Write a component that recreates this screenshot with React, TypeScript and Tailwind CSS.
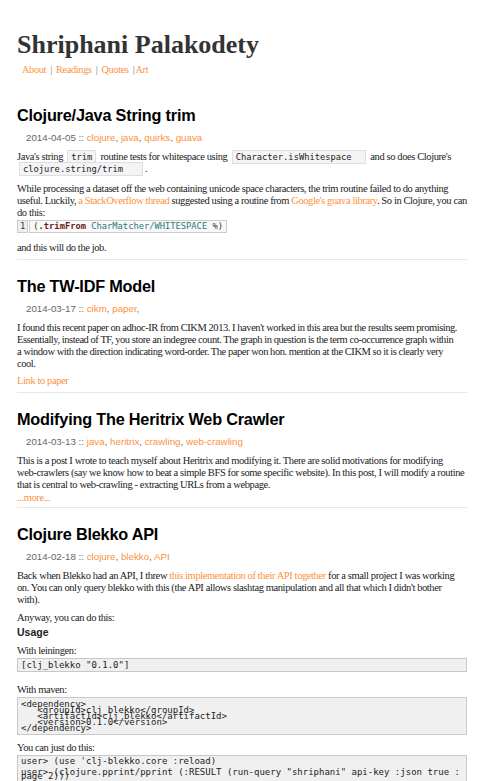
const serif = "font-['Liberation_Serif',serif]";
const sans = "font-['Liberation_Sans',Arial,sans-serif]";
const mono = "font-['DejaVu_Sans_Mono',monospace]";

function Meta({ date, tags }: { date: string; tags: string[] }) {
  return (
    <div className={`${sans} text-[9.75px] leading-[12px] tracking-normal text-[#666] pl-[9px] mt-[6px]`}>
      {date} ::{' '}
      {tags.map((t, i) => (
        <span key={i}>
          <a className="text-[#fb923c]">{t}</a>
          {i < tags.length - 1 ? ', ' : ''}
        </span>
      ))}
    </div>
  );
}

function Code({ children }: { children: React.ReactNode }) {
  return (
    <code
      className={`${mono} text-[8.75px] tracking-normal bg-[#f4f4f6] border border-[#dedede] px-[3px] py-[1px] mx-[2px] whitespace-pre`}>
      {children}
    </code>
  );
}

function Heading({ children }: { children: React.ReactNode }) {
  return <h2 className={`${sans} text-[16.25px] font-bold text-black leading-[22px] tracking-[-0.2px]`}>{children}</h2>;
}

export default function App() {
  return (
    <div
      className={`${serif} bg-white text-[#222] text-[10.5px] leading-[12px] tracking-[-0.4px] pl-[17px] pr-[14px] pt-[30px] w-[481px] h-[781px] overflow-hidden`}>
      <h1 className="text-[26px] font-bold text-[#333] leading-[30px] tracking-normal">Shriphani Palakodety</h1>
      <nav className="text-[10.25px] tracking-[-0.3px] text-[#fb923c] pl-[5px] mt-[4px] flex">
        <span>About</span>
        <span className="text-[#6c7a99] px-[4px]">|</span>
        <span>Readings</span>
        <span className="text-[#6c7a99] px-[4px]">|</span>
        <span>Quotes</span>
        <span className="text-[#6c7a99] pl-[4px] pr-[1px]">|</span>
        <span>Art</span>
      </nav>

      <article className="mt-[28px] border-b border-[#e8e8e8] pb-[5px]">
        <Heading>Clojure/Java String trim</Heading>
        <Meta date="2014-04-05" tags={['clojure', 'java', 'quirks', 'guava']} />
        <p className="mt-[7px]">
          Java's string <Code>trim</Code> routine tests for whitespace using <Code>Character.isWhitespace  </Code> and
          so does Clojure's
          <br />
          <Code>clojure.string/trim   </Code>.
        </p>
        <p className="mt-[8px]">
          While processing a dataset off the web containing unicode space characters, the trim routine failed to do
          anything
          <br />
          useful. Luckily, <a className="text-[#fb923c]">a StackOverflow thread</a> suggested using a routine from{' '}
          <a className="text-[#fb923c]">Google's guava library</a>. So in Clojure, you can
          <br />
          do this:
        </p>
        <div className={`${mono} text-[8.75px] leading-[11px] tracking-normal flex mt-[1px] whitespace-nowrap`}>
          <span className="bg-[#eee] border border-[#ccc] px-[2px] text-[#333]">1</span>
          <span className="border border-[#ccc] bg-[#f8f8f8] px-[3px] ml-[1px] text-[#333]">
            (<span className="text-[#6b1d1d] font-bold">.trimFrom</span>{' '}
            <span className="text-[#2a7a7a]">CharMatcher/WHITESPACE</span> %)
          </span>
        </div>
        <p className="mt-[9px]">and this will do the job.</p>
      </article>

      <article className="mt-[15px] border-b border-[#e8e8e8] pb-[5px]">
        <Heading>The TW-IDF Model</Heading>
        <Meta date="2014-03-17" tags={['cikm', 'paper', '']} />
        <p className="mt-[7px] tracking-[-0.45px]">
          I found this recent paper on adhoc-IR from CIKM 2013. I haven't worked in this area but the results seem
          promising.
          <br />
          Essentially, instead of TF, you store an indegree count. The graph in question is the term co-occurrence graph
          within
          <br />a window with the direction indicating word-order. The paper won hon. mention at the CIKM so it is
          clearly very
          <br />
          cool.
        </p>
        <p className="mt-[5px] text-[#fb923c]">Link to paper</p>
      </article>

      <article className="mt-[15px] border-b border-[#e8e8e8] pb-[3px]">
        <Heading>Modifying The Heritrix Web Crawler</Heading>
        <Meta date="2014-03-13" tags={['java', 'heritrix', 'crawling', 'web-crawling']} />
        <p className="mt-[7px]">
          This is a post I wrote to teach myself about Heritrix and modifying it. There are solid motivations for
          modifying
          <br />
          web-crawlers (say we know how to beat a simple BFS for some specific website). In this post, I will modify a
          routine
          <br />
          that is central to web-crawling - extracting URLs from a webpage.
        </p>
        <p className="mt-[1px] text-[#fb923c]">...more...</p>
      </article>

      <article className="mt-[15px]">
        <Heading>Clojure Blekko API</Heading>
        <Meta date="2014-02-18" tags={['clojure', 'blekko', 'API']} />
        <p className="mt-[7px]">
          Back when Blekko had an API, I threw <a className="text-[#fb923c]">this implementation of their API together</a>{' '}
          for a small project I was working
          <br />
          on. You can only query blekko with this (the API allows slashtag manipulation and all that which I didn't
          bother
          <br />
          with).
        </p>
        <p className="mt-[6px]">Anyway, you can do this:</p>
        <h3 className={`${sans} text-[10.5px] font-bold leading-[14px] tracking-normal mt-[1px]`}>Usage</h3>
        <p className="mt-[6px]">With leiningen:</p>
        <pre
          className={`${mono} text-[9px] leading-[12px] tracking-normal bg-[#f0f0f0] border border-[#c8c8c8] px-[3px] mt-[1px] text-[#222]`}>
          [clj_blekko "0.1.0"]
        </pre>
        <p className="mt-[12px]">With maven:</p>
        <pre
          className={`${mono} text-[9px] leading-[6px] tracking-normal bg-[#f0f0f0] border border-[#c8c8c8] px-[3px] pt-[3px] pb-[3px] mt-[1px] text-[#222]`}>
          {'<dependency>\n   <groupId>clj_blekko</groupId>\n   <artifactId>clj_blekko</artifactId>\n   <version>0.1.0</version>\n</dependency>'}
        </pre>
        <p className="mt-[7px]">You can just do this:</p>
        <pre
          className={`${mono} text-[9px] leading-[11px] tracking-normal bg-[#f0f0f0] border border-[#c8c8c8] px-[3px] mt-[1px] text-[#222] whitespace-pre overflow-hidden`}>
          <div>user&gt; (use 'clj-blekko.core :reload)</div>
          <div>user&gt; (clojure.pprint/pprint (:RESULT (run-query "shriphani" api-key :json true :</div>
          <div className="-mt-[7px]">page 2)))</div>
        </pre>
      </article>
    </div>
  );
}
